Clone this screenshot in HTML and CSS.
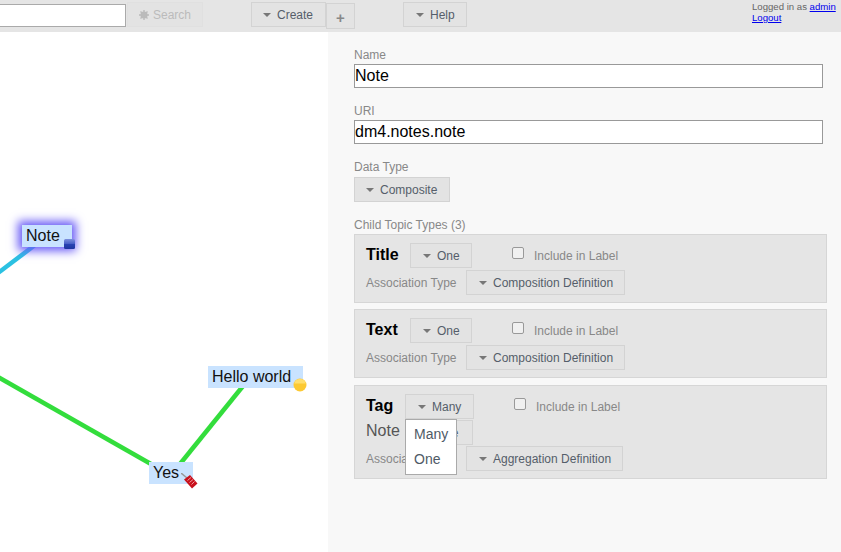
FILE: index.html
```html
<!DOCTYPE html>
<html lang="en">
<head>
    <meta charset="UTF-8">
    <title>DeepaMehta</title>
    <link rel="stylesheet" href="styles.css">
</head>
<body>
    <div class="toolbar">
        <input class="search-input" type="text">
        <button class="btn btn-search">
            <svg class="gear" width="10" height="10" viewBox="0 0 10 10"><circle cx="5" cy="5" r="3.6" fill="#bbb"/><path d="M5 0v10M0 5h10M1.5 1.5l7 7M8.5 1.5l-7 7" stroke="#bbb" stroke-width="1.4"/></svg>
            Search
        </button>
        <button class="btn btn-create"><span class="caret"></span>Create</button>
        <button class="btn btn-plus">+</button>
        <button class="btn btn-help"><span class="caret"></span>Help</button>
        <div class="login">
            Logged in as <a href="#">admin</a><br>
            <a href="#">Logout</a>
        </div>
    </div>

    <div class="main">
        <div class="canvas">
            <svg class="edges" width="328" height="520">
                <line x1="-2" y1="241" x2="35" y2="213" stroke="#2bc1e2" stroke-width="4.5"/>
                <line x1="-2" y1="345" x2="165" y2="440" stroke="#33dd3c" stroke-width="4.5"/>
                <line x1="243" y1="354" x2="180" y2="432" stroke="#33dd3c" stroke-width="4.5"/>
            </svg>

            <div class="node node-selected node-note">Note</div>
            <svg class="icon icon-note" width="11" height="10" viewBox="0 0 11 10">
                <defs>
                    <linearGradient id="note-fill" x1="0" y1="0" x2="0" y2="1">
                        <stop offset="0" stop-color="#7d90dc"/>
                        <stop offset="0.45" stop-color="#4a62c8"/>
                        <stop offset="0.5" stop-color="#2a44b4"/>
                        <stop offset="1" stop-color="#1e36a0"/>
                    </linearGradient>
                </defs>
                <rect x="0" y="0" width="11" height="10" rx="1.5" fill="url(#note-fill)"/>
            </svg>

            <div class="node node-hello">Hello world</div>
            <svg class="icon icon-hello" width="14" height="14" viewBox="0 0 14 14">
                <circle cx="7" cy="7" r="6.5" fill="#fcc932"/>
                <path d="M1.2 5.5a6 6 0 0 1 11.6 0z" fill="#ffdf6e"/>
            </svg>

            <div class="node node-yes">Yes</div>
            <svg class="icon icon-yes" width="20" height="20" viewBox="0 0 20 20">
                <line x1="0" y1="0" x2="6" y2="5" stroke="#999" stroke-width="1.5"/>
                <path d="M3 6.5L9 2l7.500 8.500-5.500 5z" fill="#c8101c"/>
                <path d="M6.500 7.500l3.500-3M8.500 9.500l3.500-3M10.500 11.500l3-3" stroke="#f29a9a" stroke-width="1"/>
            </svg>
        </div>

        <div class="detail">
            <div class="field">
                <div class="field-label">Name</div>
                <input class="field-input" type="text" value="Note">
            </div>
            <div class="field">
                <div class="field-label">URI</div>
                <input class="field-input" type="text" value="dm4.notes.note">
            </div>
            <div class="field">
                <div class="field-label">Data Type</div>
                <button class="btn btn-type"><span class="caret"></span>Composite</button>
            </div>
            <div class="field-label">Child Topic Types (3)</div>

            <div class="child-box">
                <div class="child-row">
                    <span class="child-title title-title">Title</span>
                    <button class="btn btn-card"><span class="caret"></span>One</button>
                    <input class="check" type="checkbox">
                    <span class="include">Include in Label</span>
                </div>
                <div class="child-row row-assoc">
                    <span class="assoc-label">Association Type</span>
                    <button class="btn btn-assoc"><span class="caret"></span>Composition Definition</button>
                </div>
            </div>

            <div class="child-box box-text">
                <div class="child-row">
                    <span class="child-title title-text">Text</span>
                    <button class="btn btn-card"><span class="caret"></span>One</button>
                    <input class="check" type="checkbox">
                    <span class="include">Include in Label</span>
                </div>
                <div class="child-row row-assoc">
                    <span class="assoc-label">Association Type</span>
                    <button class="btn btn-assoc"><span class="caret"></span>Composition Definition</button>
                </div>
            </div>

            <div class="child-box box-tag">
                <div class="child-row">
                    <span class="child-title title-tag">Tag</span>
                    <button class="btn btn-card btn-many"><span class="caret"></span>Many</button>
                    <input class="check" type="checkbox">
                    <span class="include">Include in Label</span>
                </div>
                <div class="child-row row-note">
                    <span class="note-label">Note</span>
                    <button class="btn btn-note"><span class="caret"></span>Note</button>
                </div>
                <div class="child-row row-aggr">
                    <span class="assoc-label">Association Type</span>
                    <button class="btn btn-aggr"><span class="caret"></span>Aggregation Definition</button>
                </div>
                <div class="menu">
                    <div class="menu-item">Many</div>
                    <div class="menu-item">One</div>
                </div>
            </div>
        </div>
    </div>
</body>
</html>
```

FILE: styles.css
```css
html, body {
    margin: 0;
    padding: 0;
    height: 100%;
    overflow: hidden;
}
body {
    font-family: "Liberation Sans", Arial, sans-serif;
    font-size: 12px;
    color: #555;
}
button {
    font-family: inherit;
}
.toolbar {
    display: flex;
    align-items: flex-start;
    height: 32px;
    background-color: #e5e5e5;
    padding-top: 2px;
    box-sizing: border-box;
}
.search-input {
    width: 136px;
    height: 23px;
    margin: 2px 1px 0 -10px;
    padding: 0;
    box-sizing: border-box;
    border: 1px solid #aaa;
    background-color: #fff;
}
.btn {
    display: inline-flex;
    align-items: center;
    height: 25px;
    padding: 0 12px;
    box-sizing: border-box;
    border: 1px solid #d3d3d3;
    border-radius: 0;
    background-color: #e3e3e3;
    color: #555e6a;
    font-size: 12px;
    white-space: nowrap;
}
.caret {
    width: 0;
    height: 0;
    margin-right: 6px;
    border-left: 4px solid transparent;
    border-right: 4px solid transparent;
    border-top: 4px solid #777;
}
.btn-search {
    width: 76px;
    color: #bbb;
    border-color: #e0e0e0;
    padding: 0 0 0 11px;
}
.gear {
    margin-right: 4px;
}
.btn-create {
    width: 75px;
    margin-left: 48px;
    padding-left: 11px;
}
.btn-plus {
    width: 29px;
    height: 26px;
    margin-top: 1px;
    padding: 2px 0 0 0;
    justify-content: center;
    font-size: 15px;
    font-weight: bold;
    color: #888;
}
.btn-help {
    width: 64px;
    margin-left: 48px;
}
.login {
    margin-left: auto;
    width: 89px;
    margin-top: -1px;
    font-size: 9.6px;
    line-height: 11px;
    color: #666;
}
.login a {
    color: #00e;
}

.main {
    display: flex;
    height: 520px;
}
.canvas {
    position: relative;
    width: 328px;
    background-color: #fff;
    overflow: hidden;
}
.edges {
    position: absolute;
    left: 0;
    top: 0;
}
.node {
    position: absolute;
    height: 22px;
    line-height: 21px;
    padding-left: 4px;
    box-sizing: border-box;
    background-color: #c9e3ff;
    color: #111;
    font-size: 16px;
}
.node-selected {
    box-shadow: 0 0 9px 4px #6a5cf6;
}
.node-note {
    left: 22px;
    top: 193px;
    width: 50px;
}
.node-hello {
    left: 208px;
    top: 334px;
    width: 95px;
}
.node-yes {
    left: 149px;
    top: 430px;
    width: 44px;
}
.icon {
    position: absolute;
}
.icon-note {
    left: 64px;
    top: 207px;
}
.icon-hello {
    left: 293px;
    top: 346px;
}
.icon-yes {
    left: 181px;
    top: 441px;
}

.detail {
    flex: 1;
    background-color: #f8f8f8;
    padding: 16px 14px 0 26px;
    box-sizing: border-box;
}
.field {
    margin-bottom: 16px;
}
.field-label {
    color: #888;
    font-size: 12px;
    line-height: 14px;
    margin-bottom: 2px;
}
.field-input {
    display: block;
    width: 469px;
    height: 24px;
    padding: 0;
    box-sizing: border-box;
    border: 1px solid #999;
    background-color: #fff;
    color: #000;
    font-family: inherit;
    font-size: 16px;
}
.btn-type {
    width: 96px;
    margin-top: 1px;
    padding-left: 11px;
}
.child-box {
    position: relative;
    width: 473px;
    margin-bottom: 6px;
    padding: 8px 0 7px 11px;
    box-sizing: border-box;
    background-color: #e5e5e5;
    border: 1px solid #d6d6d6;
}
.box-text {
    margin-bottom: 7px;
}
.child-row {
    display: flex;
    align-items: center;
    height: 25px;
}
.row-assoc {
    margin-top: 2px;
}
.row-note, .row-aggr {
    margin-top: 1px;
}
.child-title {
    margin-top: -2px;
    color: #000;
    font-size: 16px;
    font-weight: bold;
}
.title-title {
    width: 44px;
}
.title-text {
    width: 44px;
}
.title-tag {
    width: 39px;
}
.btn-card {
    width: 62px;
}
.btn-many {
    width: 69px;
}
.check {
    appearance: none;
    width: 12px;
    height: 12px;
    margin: -5px 10px 0 40px;
    box-sizing: border-box;
    border: 1px solid #999;
    border-radius: 2px;
    background-color: #f0f0f0;
}
.include {
    color: #888;
}
.assoc-label {
    width: 100px;
    color: #888;
}
.btn-assoc {
    width: 159px;
}
.btn-aggr {
    width: 157px;
}
.note-label {
    width: 40px;
    margin-top: -3px;
    color: #555;
    font-size: 16px;
}
.btn-note {
    width: 67px;
}
.menu {
    position: absolute;
    left: 50px;
    top: 33px;
    width: 52px;
    height: 56px;
    padding-top: 2px;
    box-sizing: border-box;
    background-color: #fff;
    border: 1px solid #aaa;
}
.menu-item {
    height: 25px;
    line-height: 25px;
    padding-left: 8px;
    font-size: 14px;
    color: #4f5a66;
}
```
